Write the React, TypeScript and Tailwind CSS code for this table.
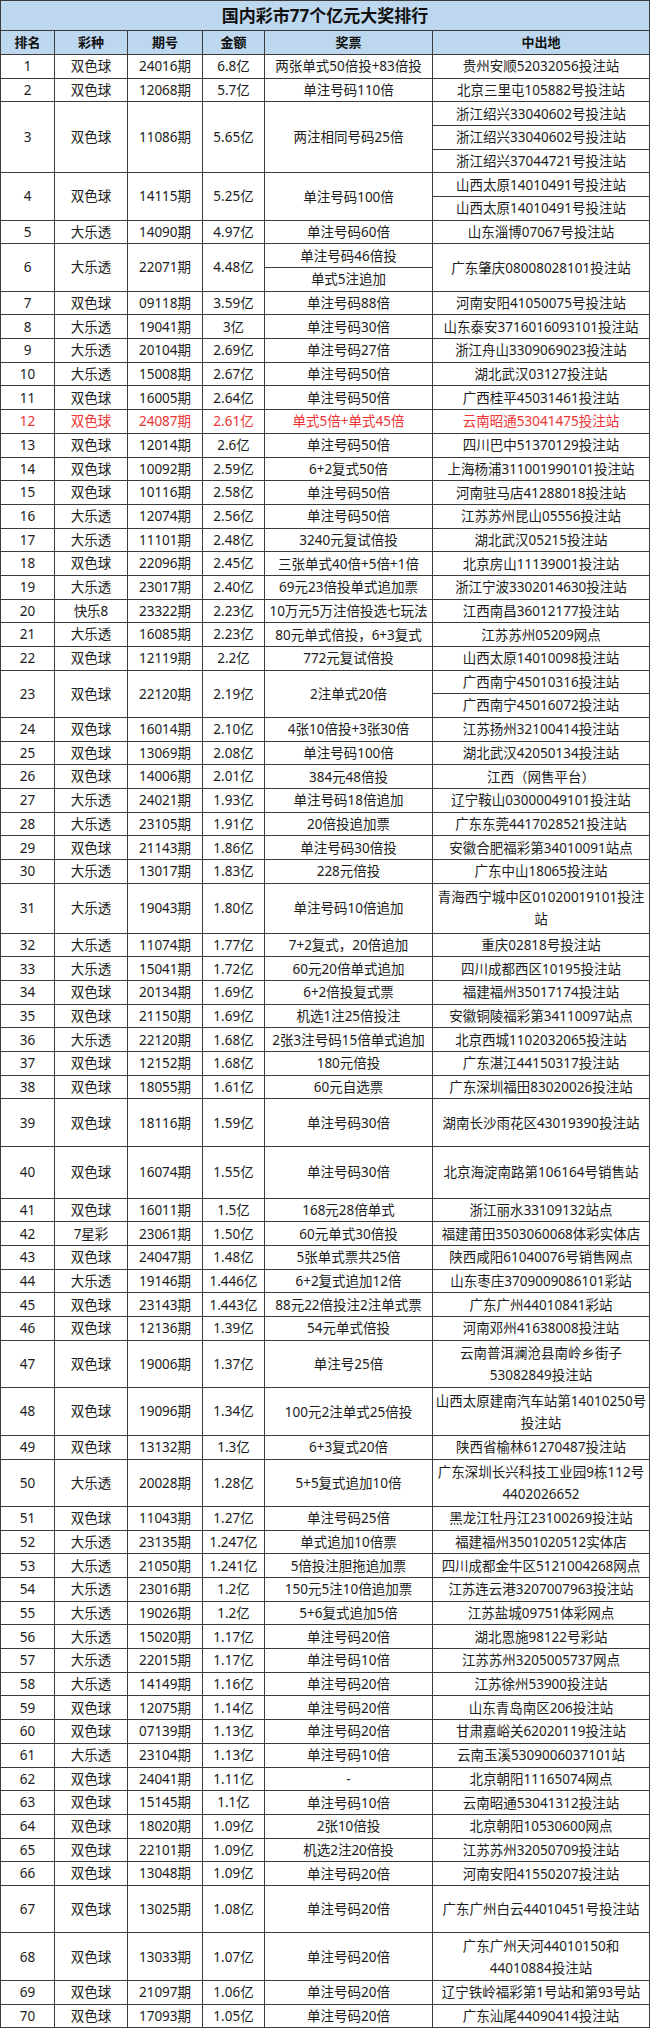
import React from 'react';

type R = {
  n: string;
  k: string;
  q: string;
  a: string;
  p: string | string[];
  l: string | string[];
  h?: 'n' | 's2' | 's3' | 't' | 't50' | 't52';
  red?: boolean;
};

const H: Record<string, string> = {
  n: 'h-[23.68px]',
  s2: 'h-[47.4px]',
  s3: 'h-[71px]',
  t: 'h-[47.6px]',
  t50: 'h-[50px]',
  t52: 'h-[51.7px]',
};

const rows: R[] = [
  { n: '1', k: '双色球', q: '24016期', a: '6.8亿', p: '两张单式50倍投+83倍投', l: '贵州安顺52032056投注站' },
  { n: '2', k: '双色球', q: '12068期', a: '5.7亿', p: '单注号码110倍', l: '北京三里屯105882号投注站' },
  { n: '3', k: '双色球', q: '11086期', a: '5.65亿', p: '两注相同号码25倍', l: ['浙江绍兴33040602号投注站', '浙江绍兴33040602号投注站', '浙江绍兴37044721号投注站'], h: 's3' },
  { n: '4', k: '双色球', q: '14115期', a: '5.25亿', p: '单注号码100倍', l: ['山西太原14010491号投注站', '山西太原14010491号投注站'], h: 's2' },
  { n: '5', k: '大乐透', q: '14090期', a: '4.97亿', p: '单注号码60倍', l: '山东淄博07067号投注站' },
  { n: '6', k: '大乐透', q: '22071期', a: '4.48亿', p: ['单注号码46倍投', '单式5注追加'], l: '广东肇庆08008028101投注站', h: 's2' },
  { n: '7', k: '双色球', q: '09118期', a: '3.59亿', p: '单注号码88倍', l: '河南安阳41050075号投注站' },
  { n: '8', k: '大乐透', q: '19041期', a: '3亿', p: '单注号码30倍', l: '山东泰安3716016093101投注站' },
  { n: '9', k: '大乐透', q: '20104期', a: '2.69亿', p: '单注号码27倍', l: '浙江舟山3309069023投注站' },
  { n: '10', k: '大乐透', q: '15008期', a: '2.67亿', p: '单注号码50倍', l: '湖北武汉03127投注站' },
  { n: '11', k: '双色球', q: '16005期', a: '2.64亿', p: '单注号码50倍', l: '广西桂平45031461投注站' },
  { n: '12', k: '双色球', q: '24087期', a: '2.61亿', p: '单式5倍+单式45倍', l: '云南昭通53041475投注站', red: true },
  { n: '13', k: '双色球', q: '12014期', a: '2.6亿', p: '单注号码50倍', l: '四川巴中51370129投注站' },
  { n: '14', k: '双色球', q: '10092期', a: '2.59亿', p: '6+2复式50倍', l: '上海杨浦311001990101投注站' },
  { n: '15', k: '双色球', q: '10116期', a: '2.58亿', p: '单注号码50倍', l: '河南驻马店41288018投注站' },
  { n: '16', k: '大乐透', q: '12074期', a: '2.56亿', p: '单注号码50倍', l: '江苏苏州昆山05556投注站' },
  { n: '17', k: '大乐透', q: '11101期', a: '2.48亿', p: '3240元复试倍投', l: '湖北武汉05215投注站' },
  { n: '18', k: '双色球', q: '22096期', a: '2.45亿', p: '三张单式40倍+5倍+1倍', l: '北京房山11139001投注站' },
  { n: '19', k: '大乐透', q: '23017期', a: '2.40亿', p: '69元23倍投单式追加票', l: '浙江宁波3302014630投注站' },
  { n: '20', k: '快乐8', q: '23322期', a: '2.23亿', p: '10万元5万注倍投选七玩法', l: '江西南昌36012177投注站' },
  { n: '21', k: '大乐透', q: '16085期', a: '2.23亿', p: '80元单式倍投，6+3复式', l: '江苏苏州05209网点' },
  { n: '22', k: '双色球', q: '12119期', a: '2.2亿', p: '772元复试倍投', l: '山西太原14010098投注站' },
  { n: '23', k: '双色球', q: '22120期', a: '2.19亿', p: '2注单式20倍', l: ['广西南宁45010316投注站', '广西南宁45016072投注站'], h: 's2' },
  { n: '24', k: '双色球', q: '16014期', a: '2.10亿', p: '4张10倍投+3张30倍', l: '江苏扬州32100414投注站' },
  { n: '25', k: '双色球', q: '13069期', a: '2.08亿', p: '单注号码100倍', l: '湖北武汉42050134投注站' },
  { n: '26', k: '双色球', q: '14006期', a: '2.01亿', p: '384元48倍投', l: '江西（网售平台）' },
  { n: '27', k: '大乐透', q: '24021期', a: '1.93亿', p: '单注号码18倍追加', l: '辽宁鞍山03000049101投注站' },
  { n: '28', k: '大乐透', q: '23105期', a: '1.91亿', p: '20倍投追加票', l: '广东东莞4417028521投注站' },
  { n: '29', k: '双色球', q: '21143期', a: '1.86亿', p: '单注号码30倍投', l: '安徽合肥福彩第34010091站点' },
  { n: '30', k: '大乐透', q: '13017期', a: '1.83亿', p: '228元倍投', l: '广东中山18065投注站' },
  { n: '31', k: '大乐透', q: '19043期', a: '1.80亿', p: '单注号码10倍追加', l: '青海西宁城中区01020019101投注\n站', h: 't50' },
  { n: '32', k: '大乐透', q: '11074期', a: '1.77亿', p: '7+2复式，20倍追加', l: '重庆02818号投注站' },
  { n: '33', k: '大乐透', q: '15041期', a: '1.72亿', p: '60元20倍单式追加', l: '四川成都西区10195投注站' },
  { n: '34', k: '双色球', q: '20134期', a: '1.69亿', p: '6+2倍投复式票', l: '福建福州35017174投注站' },
  { n: '35', k: '双色球', q: '21150期', a: '1.69亿', p: '机选1注25倍投注', l: '安徽铜陵福彩第34110097站点' },
  { n: '36', k: '大乐透', q: '22120期', a: '1.68亿', p: '2张3注号码15倍单式追加', l: '北京西城1102032065投注站' },
  { n: '37', k: '双色球', q: '12152期', a: '1.68亿', p: '180元倍投', l: '广东湛江44150317投注站' },
  { n: '38', k: '双色球', q: '18055期', a: '1.61亿', p: '60元自选票', l: '广东深圳福田83020026投注站' },
  { n: '39', k: '双色球', q: '18116期', a: '1.59亿', p: '单注号码30倍', l: '湖南长沙雨花区43019390投注站', h: 't' },
  { n: '40', k: '双色球', q: '16074期', a: '1.55亿', p: '单注号码30倍', l: '北京海淀南路第106164号销售站', h: 't52' },
  { n: '41', k: '双色球', q: '16011期', a: '1.5亿', p: '168元28倍单式', l: '浙江丽水33109132站点' },
  { n: '42', k: '7星彩', q: '23061期', a: '1.50亿', p: '60元单式30倍投', l: '福建莆田3503060068体彩实体店' },
  { n: '43', k: '双色球', q: '24047期', a: '1.48亿', p: '5张单式票共25倍', l: '陕西咸阳61040076号销售网点' },
  { n: '44', k: '大乐透', q: '19146期', a: '1.446亿', p: '6+2复式追加12倍', l: '山东枣庄3709009086101彩站' },
  { n: '45', k: '双色球', q: '23143期', a: '1.443亿', p: '88元22倍投注2注单式票', l: '广东广州44010841彩站' },
  { n: '46', k: '双色球', q: '12136期', a: '1.39亿', p: '54元单式倍投', l: '河南邓州41638008投注站' },
  { n: '47', k: '双色球', q: '19006期', a: '1.37亿', p: '单注号25倍', l: '云南普洱澜沧县南岭乡街子\n53082849投注站', h: 't' },
  { n: '48', k: '双色球', q: '19096期', a: '1.34亿', p: '100元2注单式25倍投', l: '山西太原建南汽车站第14010250号\n投注站', h: 't' },
  { n: '49', k: '双色球', q: '13132期', a: '1.3亿', p: '6+3复式20倍', l: '陕西省榆林61270487投注站' },
  { n: '50', k: '大乐透', q: '20028期', a: '1.28亿', p: '5+5复式追加10倍', l: '广东深圳长兴科技工业园9栋112号\n4402026652', h: 't' },
  { n: '51', k: '双色球', q: '11043期', a: '1.27亿', p: '单注号码25倍', l: '黑龙江牡丹江23100269投注站' },
  { n: '52', k: '大乐透', q: '23135期', a: '1.247亿', p: '单式追加10倍票', l: '福建福州3501020512实体店' },
  { n: '53', k: '大乐透', q: '21050期', a: '1.241亿', p: '5倍投注胆拖追加票', l: '四川成都金牛区5121004268网点' },
  { n: '54', k: '大乐透', q: '23016期', a: '1.2亿', p: '150元5注10倍追加票', l: '江苏连云港3207007963投注站' },
  { n: '55', k: '大乐透', q: '19026期', a: '1.2亿', p: '5+6复式追加5倍', l: '江苏盐城09751体彩网点' },
  { n: '56', k: '大乐透', q: '15020期', a: '1.17亿', p: '单注号码20倍', l: '湖北恩施98122号彩站' },
  { n: '57', k: '大乐透', q: '22015期', a: '1.17亿', p: '单注号码10倍', l: '江苏苏州3205005737网点' },
  { n: '58', k: '大乐透', q: '14149期', a: '1.16亿', p: '单注号码20倍', l: '江苏徐州53900投注站' },
  { n: '59', k: '双色球', q: '12075期', a: '1.14亿', p: '单注号码20倍', l: '山东青岛南区206投注站' },
  { n: '60', k: '双色球', q: '07139期', a: '1.13亿', p: '单注号码20倍', l: '甘肃嘉峪关62020119投注站' },
  { n: '61', k: '大乐透', q: '23104期', a: '1.13亿', p: '单注号码10倍', l: '云南玉溪5309006037101站' },
  { n: '62', k: '双色球', q: '24041期', a: '1.11亿', p: '-', l: '北京朝阳11165074网点' },
  { n: '63', k: '双色球', q: '15145期', a: '1.1亿', p: '单注号码10倍', l: '云南昭通53041312投注站' },
  { n: '64', k: '双色球', q: '18020期', a: '1.09亿', p: '2张10倍投', l: '北京朝阳10530600网点' },
  { n: '65', k: '双色球', q: '22101期', a: '1.09亿', p: '机选2注20倍投', l: '江苏苏州32050709投注站' },
  { n: '66', k: '双色球', q: '13048期', a: '1.09亿', p: '单注号码20倍', l: '河南安阳41550207投注站' },
  { n: '67', k: '双色球', q: '13025期', a: '1.08亿', p: '单注号码20倍', l: '广东广州白云44010451号投注站', h: 't' },
  { n: '68', k: '双色球', q: '13033期', a: '1.07亿', p: '单注号码20倍', l: '广东广州天河44010150和\n44010884投注站', h: 't' },
  { n: '69', k: '双色球', q: '21097期', a: '1.06亿', p: '单注号码20倍', l: '辽宁铁岭福彩第1号站和第93号站' },
  { n: '70', k: '双色球', q: '17093期', a: '1.05亿', p: '单注号码20倍', l: '广东汕尾44090414投注站' },
];

const cell = 'flex items-center justify-center border-r border-[#3c3c3c] text-center shrink-0';

function Lines({ t }: { t: string }) {
  const parts = t.split('\n');
  return (
    <div className="flex flex-col items-center leading-[22px]">
      {parts.map((s, i) => (
        <span key={i} className="whitespace-nowrap">
          {s}
        </span>
      ))}
    </div>
  );
}

function Content({ v }: { v: string | string[] }) {
  if (Array.isArray(v)) {
    return (
      <div className="flex flex-col self-stretch w-full">
        {v.map((s, i) => (
          <div
            key={i}
            className={`flex-1 flex items-center justify-center whitespace-nowrap ${
              i < v.length - 1 ? 'border-b border-[#3c3c3c]' : ''
            }`}
          >
            {s}
          </div>
        ))}
      </div>
    );
  }
  return <Lines t={v} />;
}

function Row({ r }: { r: R }) {
  const h = H[r.h ?? 'n'];
  return (
    <div
      className={`flex border-b border-[#3c3c3c] ${h} ${r.red ? 'text-[#ef3434]' : 'text-[#1c1c1c]'}`}
    >
      <div className={`${cell} w-[54px]`}>{r.n}</div>
      <div className={`${cell} w-[73px]`}>{r.k}</div>
      <div className={`${cell} w-[75px]`}>{r.q}</div>
      <div className={`${cell} w-[62px]`}>{r.a}</div>
      <div className={`${cell} w-[168px] ${Array.isArray(r.p) ? 'items-stretch' : ''}`}>
        <Content v={r.p} />
      </div>
      <div className={`${cell} flex-1 ${Array.isArray(r.l) ? 'items-stretch' : ''}`}>
        <Content v={r.l} />
      </div>
    </div>
  );
}

export default function App() {
  return (
    <div className="w-[650px] bg-white font-['Noto_Sans','Noto_Sans_CJK_SC',sans-serif] text-[13.5px]">
      <div className="border-l border-t border-[#3c3c3c]">
        <div className="flex h-[30px] items-center justify-center border-b border-r border-[#3c3c3c] bg-[#bdd7ee] text-[17px] font-bold text-[#111]">
          国内彩市77个亿元大奖排行
        </div>
        <div className="flex h-[24px] border-b border-[#3c3c3c] bg-[#bdd7ee] text-[13px] font-bold text-[#111]">
          <div className={`${cell} w-[54px]`}>排名</div>
          <div className={`${cell} w-[73px]`}>彩种</div>
          <div className={`${cell} w-[75px]`}>期号</div>
          <div className={`${cell} w-[62px]`}>金额</div>
          <div className={`${cell} w-[168px]`}>奖票</div>
          <div className={`${cell} flex-1`}>中出地</div>
        </div>
        {rows.map((r) => (
          <Row key={r.n} r={r} />
        ))}
      </div>
    </div>
  );
}
